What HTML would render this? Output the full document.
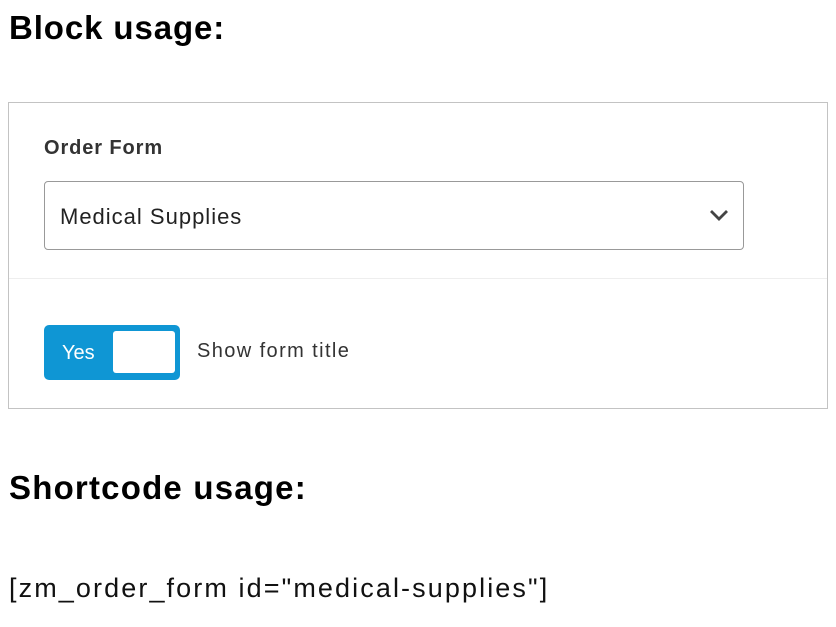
<!DOCTYPE html>
<html><head><style>
body{margin:0;width:836px;height:627px;background:#fff;font-family:"Liberation Sans",sans-serif;color:#000;position:relative;overflow:hidden}
.a{position:absolute;white-space:nowrap}
h1{margin:0;font-size:33px;font-weight:bold}
</style></head><body>
<h1 class="a" style="left:9px;top:9px;letter-spacing:0.9px">Block usage:</h1>
<div class="a" style="left:8px;top:102px;width:818px;height:305px;border:1px solid #c3c3c3"></div>
<div class="a" style="left:9px;top:278px;width:818px;height:1px;background:#eee"></div>
<div class="a" style="left:44px;top:137px;font-size:20px;font-weight:bold;color:#333;letter-spacing:0.9px">Order Form</div>
<div class="a" style="left:44px;top:181px;width:698px;height:67px;border:1px solid #999;border-radius:4px"></div>
<div class="a" style="left:60px;top:204px;font-size:22px;color:#222;letter-spacing:1px">Medical Supplies</div>
<svg class="a" style="left:708px;top:208px" width="22" height="14"><path d="M3 3l8 8 8-8" fill="none" stroke="#444" stroke-width="2.8"/></svg>
<div class="a" style="left:44px;top:325px;width:136px;height:55px;background:#0f96d4;border-radius:5px"></div>
<div class="a" style="left:113px;top:331px;width:62px;height:42px;background:#fff;border-radius:3px"></div>
<div class="a" style="left:62px;top:342px;font-size:20px;color:#fff">Yes</div>
<div class="a" style="left:197px;top:340px;font-size:20px;color:#333;letter-spacing:1.4px">Show form title</div>
<h1 class="a" style="left:9px;top:469px;letter-spacing:1.2px">Shortcode usage:</h1>
<div class="a" style="left:9px;top:573px;font-size:27px;color:#111;letter-spacing:2.1px">[zm_order_form id="medical-supplies"]</div>
</body></html>
